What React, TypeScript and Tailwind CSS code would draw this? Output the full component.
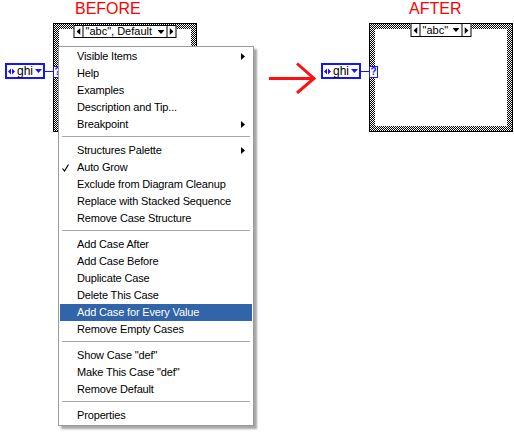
import React from "react";

type Item = { label: string; sub?: boolean; checked?: boolean; active?: boolean };

const groups: Item[][] = [
  [
    { label: "Visible Items", sub: true },
    { label: "Help" },
    { label: "Examples" },
    { label: "Description and Tip..." },
    { label: "Breakpoint", sub: true },
  ],
  [
    { label: "Structures Palette", sub: true },
    { label: "Auto Grow", checked: true },
    { label: "Exclude from Diagram Cleanup" },
    { label: "Replace with Stacked Sequence" },
    { label: "Remove Case Structure" },
  ],
  [
    { label: "Add Case After" },
    { label: "Add Case Before" },
    { label: "Duplicate Case" },
    { label: "Delete This Case" },
    { label: "Add Case for Every Value", active: true },
    { label: "Remove Empty Cases" },
  ],
  [{ label: 'Show Case "def"' }, { label: 'Make This Case "def"' }, { label: "Remove Default" }],
  [{ label: "Properties" }],
];

const GhiControl: React.FC = () => (
  <div className="flex items-center">
    <div className="w-[40px] h-[16px] border-2 border-[#1414ff] bg-white flex items-center pl-px">
      <svg width="7" height="7" viewBox="0 0 7 7">
        <path d="M0 3.5L3 0.5V6.5Z M7 3.5L4 0.5V6.5Z" fill="#1414ff" />
      </svg>
      <span className="ml-[2px] text-[12px] leading-none text-black">ghi</span>
      <svg width="7" height="4" viewBox="0 0 7 4" className="ml-auto mr-px">
        <path d="M0 0H7L3.5 4Z" fill="#1414ff" />
      </svg>
    </div>
    <div className="w-[8px] h-px bg-[#1414ff]" />
  </div>
);

const Selector: React.FC<{ text: string; width: string; top: string; height: string }> = ({ text, width, top, height }) => (
  <div className={`absolute left-1/2 -translate-x-1/2 ${top} ${width} ${height} flex border border-black bg-white`}>
    <div className="w-[9px] border-r border-black flex items-center justify-center">
      <svg width="4" height="7" viewBox="0 0 4 7">
        <path d="M4 0V7L0 3.5Z" fill="#000" />
      </svg>
    </div>
    <div className="flex-1 flex items-center justify-between pl-[2px] pr-[2px]">
      <span className="text-[11px] leading-[11px] text-black whitespace-nowrap">{text}</span>
      <svg width="7" height="4" viewBox="0 0 7 4" className="shrink-0">
        <path d="M0 0H7L3.5 4Z" fill="#000" />
      </svg>
    </div>
    <div className="w-[9px] border-l border-black flex items-center justify-center">
      <svg width="4" height="7" viewBox="0 0 4 7">
        <path d="M0 0V7L4 3.5Z" fill="#000" />
      </svg>
    </div>
  </div>
);

const CaseFrame: React.FC<{ children?: React.ReactNode }> = ({ children }) => (
  <div className="relative w-[144px] h-[109px] border border-black p-[5px] bg-[repeating-conic-gradient(#000_0_25%,#fff_0_50%)] bg-size-[2px_2px]">
    <div className="w-full h-full bg-white" />
    <div className="absolute left-[-1px] top-[42px] w-[9px] h-[12px] border border-[#1414ff] bg-white flex items-center justify-center">
      <span className="text-[10px] leading-[10px] font-bold text-[#1414ff]">?</span>
    </div>
    {children}
  </div>
);

const Arrow: React.FC = () => (
  <svg width="48" height="32" viewBox="0 0 48 32" className="mt-[62px] ml-[72px]">
    <path d="M0 16.5H44" stroke="#ff1010" strokeWidth="3" />
    <path d="M28 1.5L45 16.5L28 31" stroke="#ff1010" strokeWidth="3" fill="none" />
  </svg>
);

const ContextMenu: React.FC = () => (
  <div className="absolute left-[58px] top-[46px] w-[196px] border border-[#9a9a9a] bg-white p-px shadow-[3px_3px_2px_rgba(0,0,0,0.35)]">
    {groups.map((group, gi) => (
      <div key={gi}>
        {gi > 0 && (
          <div className="h-[9px] pt-[3px]">
            <div className="mx-[2px] h-px bg-[#a6a6a6]" />
          </div>
        )}
        {group.map((item) => (
          <div
            key={item.label}
            className={`relative h-[17px] flex items-center pl-[17px] text-[11px] tracking-[-0.15px] whitespace-nowrap ${
              item.active ? "bg-[#3164a8] text-white" : "text-black"
            }`}
          >
            {item.checked && (
              <svg width="7" height="8" viewBox="0 0 7 8" className="absolute left-[2px] top-[5px]">
                <path d="M0.5 4.5L2.5 7L6.5 0.5" stroke="#000" strokeWidth="1.2" fill="none" />
              </svg>
            )}
            {item.label}
            {item.sub && (
              <svg width="4" height="7" viewBox="0 0 4 7" className="absolute right-[7px] top-[5px]">
                <path d="M0 0V7L4 3.5Z" fill="#000" />
              </svg>
            )}
          </div>
        ))}
      </div>
    ))}
  </div>
);

export default function App() {
  return (
    <div className="relative w-[514px] h-[432px] bg-white overflow-hidden font-['Liberation_Sans',Arial,sans-serif]">
      <div className="flex items-start pl-[5px]">
        {/* Before */}
        <div className="flex items-start">
          <div className="mt-[63px]">
            <GhiControl />
          </div>
          <div className="flex flex-col">
            <div className="h-[23px] pl-[22px] text-[16px] leading-[18px] text-[#ff0000]">BEFORE</div>
            <CaseFrame>
              <Selector text={'"abc", Default'} width="w-[103px]" top="top-[1px]" height="h-[13px]" />
            </CaseFrame>
          </div>
        </div>

        <Arrow />

        {/* After */}
        <div className="flex items-start ml-[4px]">
          <div className="mt-[63px]">
            <GhiControl />
          </div>
          <div className="flex flex-col">
            <div className="h-[23px] pl-[40px] text-[16px] leading-[18px] text-[#ff0000]">AFTER</div>
            <CaseFrame>
              <Selector text={'"abc"'} width="w-[61px]" top="top-[-1px]" height="h-[14px]" />
            </CaseFrame>
          </div>
        </div>
      </div>

      <ContextMenu />
    </div>
  );
}
